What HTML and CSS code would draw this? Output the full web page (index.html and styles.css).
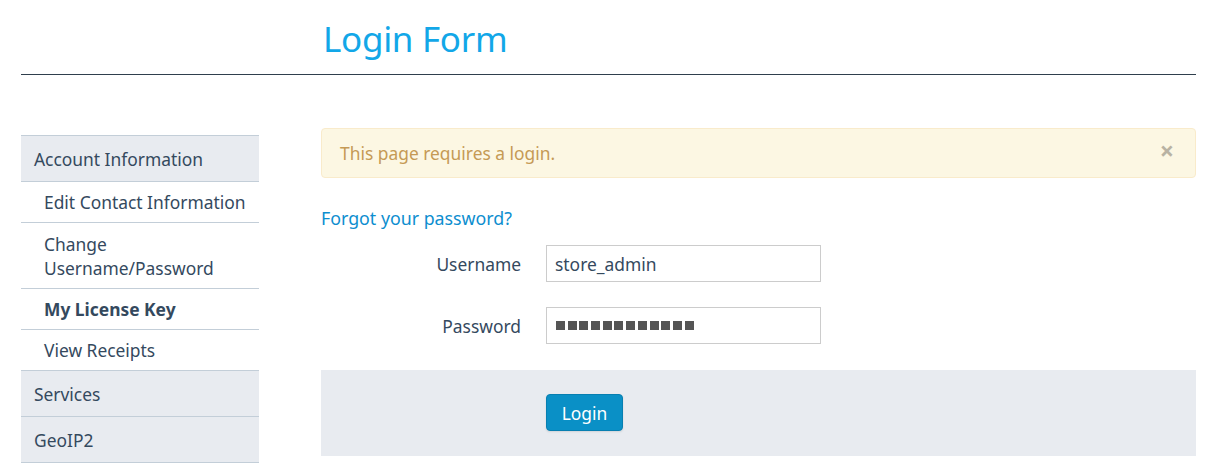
FILE: index.html
```html
<!DOCTYPE html>
<html>
<head>
<meta charset="utf-8">
<link rel="stylesheet" href="styles.css">
</head>
<body>
<div class="page">
  <header class="header">
    <h1 class="title">Login Form</h1>
  </header>
  <div class="layout">
    <nav class="sidebar">
      <a class="nav-item section">Account Information</a>
      <a class="nav-item sub">Edit Contact Information</a>
      <a class="nav-item sub">Change Username/Password</a>
      <a class="nav-item sub active">My License Key</a>
      <a class="nav-item sub">View Receipts</a>
      <a class="nav-item section">Services</a>
      <a class="nav-item section">GeoIP2</a>
    </nav>
    <main class="main">
      <div class="alert">
        <span>This page requires a login.</span>
        <span class="close">&times;</span>
      </div>
      <a class="forgot">Forgot your password?</a>
      <form class="form">
        <div class="row">
          <label class="label">Username</label>
          <div class="input">store_admin</div>
        </div>
        <div class="row">
          <label class="label">Password</label>
          <div class="input dots"><span></span><span></span><span></span><span></span><span></span><span></span><span></span><span></span><span></span><span></span><span></span><span></span></div>
        </div>
        <div class="actions">
          <button type="button" class="btn">Login</button>
        </div>
      </form>
    </main>
  </div>
</div>
</body>
</html>
```
FILE: styles.css
```css
* { box-sizing: border-box; }
body {
  margin: 0;
  font-family: "Noto Sans", "Open Sans", sans-serif;
  color: #34495e;
  background: #fff;
}
.page {
  padding: 0 20px 0 21px;
}
.header {
  border-bottom: 1px solid #2f3f4d;
  height: 75px;
  padding-left: 302px;
}
.title {
  margin: 0;
  padding-top: 14px;
  font-size: 35px;
  font-weight: 400;
  color: #12a7e8;
  line-height: 50px;
  letter-spacing: -0.3px;
}
.layout {
  display: flex;
  gap: 62px;
}
.sidebar {
  width: 238px;
  flex: none;
  margin-top: 60px;
  display: flex;
  flex-direction: column;
  border-top: 1px solid #c3ced8;
}
.nav-item {
  display: block;
  border-bottom: 1px solid #c3ced8;
  font-size: 17.4px;
  line-height: 23px;
  color: #34495e;
  white-space: nowrap;
}
.nav-item.section {
  background: #e8ebf0;
  padding: 12px 13px;
  height: 46px;
}
.nav-item.sub {
  padding: 9px 10px 8px 23px;
}
.nav-item.sub:nth-child(3) {
  padding-top: 9px;
  padding-bottom: 8px;
  line-height: 24px;
  white-space: normal;
}
.nav-item.active {
  font-weight: 700;
}
.main {
  flex: 1;
  margin-top: 53px;
}
.alert {
  background: #fcf7e3;
  border: 1px solid #f9ebcb;
  border-radius: 4px;
  height: 50px;
  padding: 0 18px;
  display: flex;
  align-items: center;
  justify-content: space-between;
  color: #c59a55;
  font-size: 17.4px;
}
.close {
  color: #b9b3a3;
  font-size: 25px;
  font-weight: 700;
  line-height: 1;
  margin-right: 3px;
  margin-top: -6px;
}
.forgot {
  display: block;
  margin-top: 28px;
  font-size: 17.8px;
  color: #0d8ecf;
  line-height: 24px;
}
.form {
  margin-top: 15px;
}
.row {
  display: flex;
  align-items: center;
  height: 37px;
  margin-bottom: 25px;
}
.label {
  width: 200px;
  text-align: right;
  font-size: 17.4px;
  color: #34495e;
}
.input {
  margin-left: 25px;
  width: 275px;
  height: 37px;
  border: 1px solid #cccccc;
  padding: 0 8px;
  display: flex;
  align-items: center;
  font-size: 17.4px;
  color: #34495e;
}
.dots span {
  width: 9px;
  height: 9px;
  background: #555;
  margin-right: 2.7px;
  flex: none;
}
.dots span:first-child { margin-left: 1px; }
.actions {
  background: #e8ebf0;
  height: 86px;
  margin-top: 26px;
  padding: 24px 0 0 225px;
}
.btn {
  width: 77px;
  height: 37px;
  background: #0a90c6;
  border: 1px solid #077fb1;
  border-radius: 4px;
  color: #fff;
  font-family: inherit;
  font-size: 17.4px;
  padding: 0;
  box-shadow: 0 1px 2px rgba(0,0,0,0.1);
}
```
